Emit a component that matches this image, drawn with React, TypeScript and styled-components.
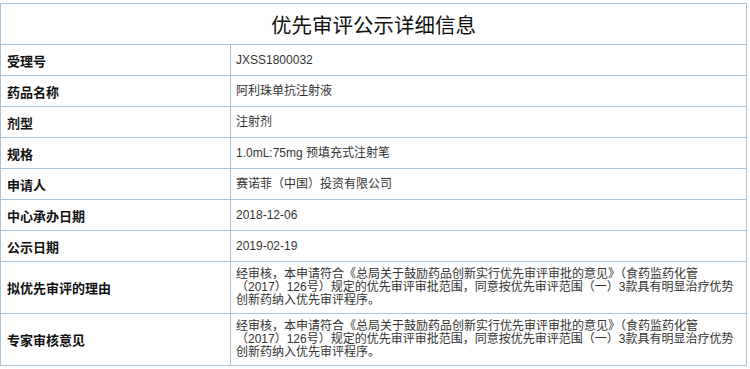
import React from "react";
import styled, { createGlobalStyle } from "styled-components";

const Global = createGlobalStyle`
  html, body { margin: 0; padding: 0; background: #fff; }
  body { padding-top: 3px; font-family: "Liberation Sans", "Noto Sans CJK SC", sans-serif; }
`;

const Table = styled.table`
  border-collapse: collapse;
  width: 747px;
  table-layout: fixed;
  border: 1px solid #a8c3da;
`;

const TitleCell = styled.th`
  height: 40px;
  padding: 0;
  border: 1px solid #a8c3da;
  font-family: "Liberation Sans", "Noto Sans CJK SC", sans-serif;
  font-weight: normal;
  font-size: 20.5px;
  color: #111;
  text-align: center;
  vertical-align: middle;
`;

const Row = styled.tr<{ $tall?: boolean }>`
  height: ${(p) => (p.$tall ? "52px" : "31px")};
`;

const Label = styled.td`
  width: 224px;
  padding: 0 0 0 6px;
  border: 1px solid #a8c3da;
  font-family: "Liberation Sans", "Noto Sans CJK SC", sans-serif;
  font-weight: bold;
  font-size: 13px;
  color: #111;
  vertical-align: middle;
`;

const Value = styled.td`
  padding: 0 10px 0 5px;
  border: 1px solid #a8c3da;
  font-family: "Liberation Sans", "Noto Sans CJK SC", sans-serif;
  font-size: 12px;
  line-height: 13px;
  color: #333;
  vertical-align: middle;
`;

const opinion =
  "经审核，本申请符合《总局关于鼓励药品创新实行优先审评审批的意见》（食药监药化管（2017）126号）规定的优先审评审批范围，同意按优先审评范围（一）3款具有明显治疗优势创新药纳入优先审评程序。";

const rows: { label: string; value: string; tall?: boolean }[] = [
  { label: "受理号", value: "JXSS1800032" },
  { label: "药品名称", value: "阿利珠单抗注射液" },
  { label: "剂型", value: "注射剂" },
  { label: "规格", value: "1.0mL:75mg 预填充式注射笔" },
  { label: "申请人", value: "赛诺菲（中国）投资有限公司" },
  { label: "中心承办日期", value: "2018-12-06" },
  { label: "公示日期", value: "2019-02-19" },
  { label: "拟优先审评的理由", value: opinion, tall: true },
  { label: "专家审核意见", value: opinion, tall: true },
];

export default function App() {
  return (
    <>
      <Global />
      <Table>
        <colgroup>
          <col style={{ width: 230 }} />
          <col />
        </colgroup>
        <thead>
          <tr>
            <TitleCell colSpan={2}>优先审评公示详细信息</TitleCell>
          </tr>
        </thead>
        <tbody>
          {rows.map((r) => (
            <Row key={r.label} $tall={r.tall}>
              <Label>{r.label}</Label>
              <Value>{r.value}</Value>
            </Row>
          ))}
        </tbody>
      </Table>
    </>
  );
}
